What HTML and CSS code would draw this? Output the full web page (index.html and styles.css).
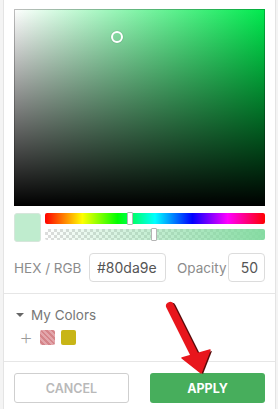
FILE: index.html
```html
<!DOCTYPE html>
<html lang="en">
<head>
    <meta charset="UTF-8">
    <meta name="viewport" content="width=device-width, initial-scale=1.0">
    <title>Color Picker</title>
    <link rel="stylesheet" href="styles.css">
</head>
<body>
    <div class="picker">
        <div class="picker-body">
            <div class="sat-area">
                <span class="sat-thumb"></span>
            </div>

            <div class="slider-row">
                <div class="preview"></div>
                <div class="bars">
                    <div class="hue-bar"><span class="thumb hue-thumb"></span></div>
                    <div class="alpha-bar"><span class="thumb alpha-thumb"></span></div>
                </div>
            </div>

            <div class="input-row">
                <span class="hex-label">HEX / RGB</span>
                <input class="field hex-field" type="text" value="#80da9e">
                <span class="opacity-label">Opacity</span>
                <input class="field opacity-field" type="text" value="50">
            </div>
        </div>

        <div class="my-colors">
            <div class="my-colors-title">
                <span class="caret"></span>
                My Colors
            </div>
            <div class="swatches">
                <span class="add">+</span>
                <span class="swatch swatch-pink"></span>
                <span class="swatch swatch-olive"></span>
            </div>
        </div>

        <div class="actions">
            <a href="#" class="btn btn-cancel">CANCEL</a>
            <a href="#" class="btn btn-apply">APPLY</a>
        </div>
    </div>

    <!-- annotation arrow drawn over the panel -->
    <svg class="arrow" width="278" height="409" viewBox="0 0 278 409">
        <g class="arrow-shadow" transform="translate(2,1)">
            <line x1="170" y1="306" x2="195" y2="356" />
            <polygon points="182,358 210,350 201,373" />
        </g>
        <g class="arrow-main">
            <line x1="170" y1="306" x2="195" y2="356" />
            <polygon points="182,358 210,350 201,373" />
        </g>
    </svg>
</body>
</html>
```

FILE: styles.css
```css
* {
    margin: 0;
    padding: 0;
    box-sizing: border-box;
    font-family: Inter, "Open Sans", Arial, sans-serif;
}
body {
    background-color: #f4f4f4;
    width: 278px;
    height: 409px;
    overflow: hidden;
    position: relative;
}
.picker {
    background-color: #fff;
    margin-left: 3px;
    width: 273px;
    height: 409px;
    border-left: 1px solid #e4e4e4;
    border-right: 1px solid #e4e4e4;
}
.picker-body {
    padding: 9px 10px 11px;
    border-bottom: 1px solid #e6e6e6;
}
.sat-area {
    height: 197px;
    position: relative;
    background:
        linear-gradient(to top, #000, rgba(0,0,0,0)),
        linear-gradient(to right, #fff, hsl(140, 100%, 46%));
    box-shadow: inset 0 0 0 1px rgba(0,0,0,0.25);
}
.sat-thumb {
    position: absolute;
    left: 97px;
    top: 22px;
    width: 12px;
    height: 12px;
    border: 2px solid #fff;
    border-radius: 50%;
    box-shadow: 0 0 1px rgba(0,0,0,0.5);
}
.slider-row {
    display: flex;
    gap: 4px;
    margin-top: 7px;
}
.preview {
    width: 27px;
    height: 29px;
    border-radius: 3px;
    background-color: #bfecce;
    border: 1px solid #d6e6db;
}
.bars {
    flex: 1;
    display: flex;
    flex-direction: column;
    gap: 5px;
}
.hue-bar,
.alpha-bar {
    height: 11px;
    border-radius: 2px;
    position: relative;
}
.hue-bar {
    background: linear-gradient(to right, #f00 0%, #ff0 17%, #0f0 33%, #0ff 50%, #00f 67%, #f0f 83%, #f00 100%);
}
.alpha-bar {
    background:
        linear-gradient(to right, rgba(128,218,158,0), rgba(128,218,158,0.95)),
        repeating-conic-gradient(#dcdcdc 0% 25%, #fff 0% 50%) 0 0 / 6px 6px;
}
.thumb {
    position: absolute;
    top: -1px;
    width: 6px;
    height: 13px;
    background-color: #fff;
    border: 1px solid #b5b5b5;
    border-radius: 1px;
}
.hue-thumb {
    left: 82px;
}
.alpha-thumb {
    left: 106px;
}
.input-row {
    display: flex;
    align-items: center;
    margin-top: 11px;
}
.hex-label,
.opacity-label {
    font-size: 13.5px;
    color: #8c8c8c;
}
.hex-label {
    width: 75px;
}
.opacity-label {
    width: 51px;
    margin-left: 11px;
}
.field {
    height: 29px;
    border: 1px solid #dcdcdc;
    border-radius: 4px;
    font-size: 14px;
    color: #555;
    background: #fff;
    outline: none;
}
.hex-field {
    width: 77px;
    padding-left: 7px;
}
.opacity-field {
    width: 37px;
    text-align: right;
    padding-right: 6px;
}
.my-colors {
    padding: 13px 10px 16px 12px;
    border-bottom: 1px solid #e6e6e6;
}
.my-colors-title {
    display: flex;
    align-items: center;
    font-size: 13.5px;
    color: #777;
}
.caret {
    width: 0;
    height: 0;
    border-left: 4px solid transparent;
    border-right: 4px solid transparent;
    border-top: 4px solid #666;
    margin: 0 7px 0 0;
}
.swatches {
    display: flex;
    align-items: center;
    gap: 6px;
    margin-top: 7px;
}
.add {
    font-size: 22px;
    font-weight: 200;
    color: #9a9a9a;
    width: 16px;
    text-align: center;
    line-height: 15px;
    margin-left: 2px;
}
.swatch {
    width: 15px;
    height: 15px;
    border-radius: 2px;
}
.swatch-pink {
    background:
        linear-gradient(rgba(215,95,105,0.5), rgba(215,95,105,0.5)),
        repeating-linear-gradient(45deg, #eee 0 2px, #d3aaaa 2px 4px);
}
.swatch-olive {
    background-color: #c8b517;
}
.actions {
    display: flex;
    justify-content: space-between;
    padding: 11px 10px 0;
}
.btn {
    width: 115px;
    height: 30px;
    display: flex;
    align-items: center;
    justify-content: center;
    font-size: 12.5px;
    font-weight: 600;
    text-decoration: none;
    border-radius: 3px;
}
.btn-cancel {
    color: #b9b9b9;
    border: 1px solid #cfcfcf;
    background: #fff;
}
.btn-apply {
    color: #fff;
    background-color: #47ae5c;
    font-weight: 700;
}
.arrow {
    position: absolute;
    left: 0;
    top: 0;
    pointer-events: none;
}
.arrow line {
    stroke-width: 8;
    stroke-linecap: round;
}
.arrow-shadow line {
    stroke: #5a0a0a;
}
.arrow-shadow polygon {
    fill: #5a0a0a;
}
.arrow-main line {
    stroke: #e8161c;
}
.arrow-main polygon {
    fill: #e8161c;
    stroke: #e8161c;
    stroke-width: 1.5;
    stroke-linejoin: round;
}
```
